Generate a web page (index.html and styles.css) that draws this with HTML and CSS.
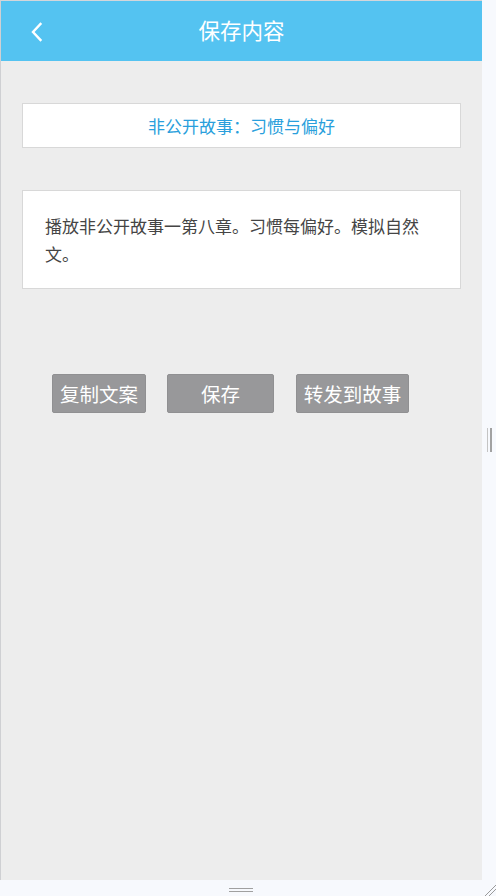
FILE: index.html
```html
<!DOCTYPE html>
<html lang="zh-CN">
<head>
<meta charset="utf-8">
<title>保存内容</title>
<link rel="stylesheet" href="styles.css">
</head>
<body>
<div class="shell">
  <div class="frame">
    <header class="topbar">
      <span class="back">
        <svg width="14" height="20" viewBox="0 0 14 20"><polyline points="10.5,2 3,10 10.5,18" fill="none" stroke="#fff" stroke-width="2.4" stroke-linecap="square" stroke-linejoin="miter"/></svg>
      </span>
      <h1 class="title">保存内容</h1>
      <span class="spacer"></span>
    </header>
    <main class="content">
      <div class="card card-title">非公开故事：习惯与偏好</div>
      <div class="card card-body">播放非公开故事一第八章。习惯每偏好。模拟自然文。</div>
      <div class="actions">
        <button class="btn btn-copy">复制文案</button>
        <button class="btn btn-save">保存</button>
        <button class="btn btn-forward">转发到故事</button>
      </div>
    </main>
  </div>
  <div class="vgrip"><span class="vline light"></span><span class="vline dark"></span></div>
  <div class="hgrip"><span class="hline"></span><span class="hline"></span></div>
  <div class="corner">
    <svg width="14" height="16" viewBox="0 0 14 16"><line x1="3" y1="16" x2="14" y2="5" stroke="#9a9a9a" stroke-width="1"/><line x1="7" y1="16" x2="14" y2="9" stroke="#9a9a9a" stroke-width="1"/></svg>
  </div>
</div>
</body>
</html>
```

FILE: styles.css
```css
html, body {
  margin: 0;
  padding: 0;
}
body {
  background: #f7f9fd;
  font-family: "Noto Sans CJK SC", "Microsoft YaHei", sans-serif;
  width: 496px;
  height: 896px;
  overflow: hidden;
}
.shell {
  display: grid;
  grid-template-columns: 482px 14px;
  grid-template-rows: 880px 16px;
}
.frame {
  border-left: 1px solid #cfd0d3;
  border-top: 1px solid #d4d6da;
  background: #ededed;
  display: flex;
  flex-direction: column;
}
.topbar {
  height: 60px;
  background: #54c3f1;
  display: flex;
  align-items: center;
  padding: 0 0 0 29px;
}
.back {
  width: 14px;
  height: 20px;
  display: flex;
  margin-top: 1px;
}
.title {
  flex: 1;
  margin: 0;
  text-align: center;
  color: #fff;
  font-size: 21.5px;
  font-weight: normal;
  line-height: 58px;
  padding: 0 43px 2px 0;
}
.spacer {
  width: 0;
}
.content {
  flex: 1;
  padding: 42px 21px 0 21px;
}
.card {
  background: #fff;
  border: 1px solid #d8d8d8;
}
.card-title {
  height: 43px;
  line-height: 43px;
  text-align: center;
  font-size: 17px;
  color: #2a9fdc;
}
.card-body {
  margin-top: 42px;
  padding: 21px 22px 20px 22px;
  font-size: 17px;
  line-height: 28px;
  color: #454545;
}
.actions {
  margin-top: 85px;
  padding-left: 30px;
  display: flex;
  gap: 21px;
}
.btn {
  height: 39px;
  border: 1px solid #909092;
  border-radius: 2px;
  background: #98989a;
  color: #fff;
  font-family: "Noto Sans CJK SC", "Microsoft YaHei", sans-serif;
  font-size: 19.5px;
  line-height: 37px;
  padding: 0;
  text-align: center;
}
.btn-copy { width: 94px; }
.btn-save { width: 107px; }
.btn-forward { width: 113px; margin-left: 1px; }
.vgrip {
  display: flex;
  align-items: center;
  justify-content: flex-start;
  padding-left: 5px;
  gap: 2px;
}
.vline {
  width: 1px;
  height: 24px;
}
.vline.light { background: #c4c4c4; }
.vline.dark { width: 2px; background: #a2a2a2; }
.hgrip {
  display: flex;
  flex-direction: column;
  align-items: center;
  justify-content: flex-start;
  padding-top: 8px;
  gap: 2px;
}
.hline {
  width: 24px;
  height: 1px;
  background: #a0a0a0;
}
.corner {
  display: flex;
}
```
